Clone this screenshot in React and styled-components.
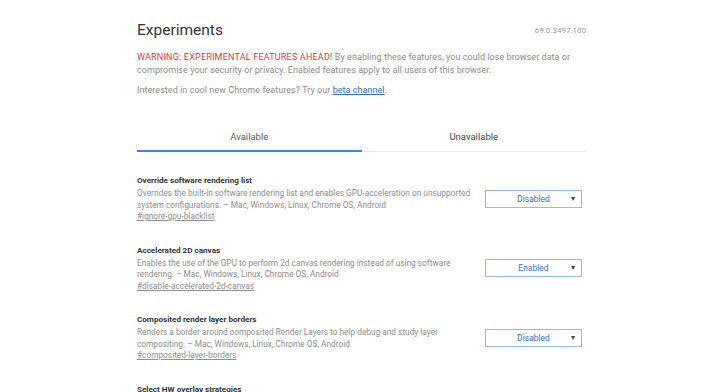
import React from "react";
import styled, { createGlobalStyle } from "styled-components";

const Global = createGlobalStyle`
  html, body { margin: 0; padding: 0; background: #fff; }
  body { font-family: Roboto, "Noto Sans", Arial, sans-serif; color: #333; }
`;

const Page = styled.div`
  padding: 0 120px 0 137px;
  width: 449px;
`;

const Header = styled.header`
  display: flex;
  justify-content: space-between;
  align-items: center;
  height: 30px;
  margin-top: 15px;
`;

const Title = styled.h1`
  margin: 0;
  font-size: 15.5px;
  font-weight: 400;
  color: #333;
  line-height: 30px;
`;

const Version = styled.span`
  font-size: 8px;
  color: #9a9a9a;
`;

const Blurb = styled.p`
  margin: ${(p) => p.$mt || 0}px 0 0;
  font-size: 9px;
  line-height: 13px;
  letter-spacing: 0.05px;
  color: #8b8b8b;
`;

const Warn = styled.span`
  color: #e53935;
  letter-spacing: 0.2px;
`;

const Link = styled.a`
  color: #3367d6;
  text-decoration: underline;
`;

const Tabs = styled.div`
  display: flex;
  margin-top: 32px;
  border-bottom: 1px solid #ebebeb;
`;

const Tab = styled.div`
  flex: 1;
  text-align: center;
  font-size: 9.5px;
  color: ${(p) => (p.$active ? "#5a5a5a" : "#444")};
  height: 23px;
  line-height: 15px;
  box-shadow: ${(p) => (p.$active ? "inset 0 -2px 0 #3b84e8" : "none")};
  margin-bottom: -1px;
`;

const List = styled.div`
  margin-top: 23px;
  display: flex;
  flex-direction: column;
  gap: 22px;
`;

const Feature = styled.div`
  display: flex;
  align-items: center;
  justify-content: space-between;
`;

const Info = styled.div`
  width: 345px;
`;

const FTitle = styled.div`
  font-size: 8.1px;
  font-weight: 700;
  color: #333;
  line-height: 11px;
  margin-bottom: 2px;
`;

const Desc = styled.div`
  font-size: 8.3px;
  line-height: 11.5px;
  color: #8e8e8e;
`;

const Anchor = styled.a`
  display: block;
  font-size: 8.3px;
  line-height: 11.5px;
  color: #8e8e8e;
  text-decoration: underline;
`;

const Select = styled.div`
  box-sizing: border-box;
  width: 97px;
  height: 18px;
  margin-right: 4px;
  border: 1px solid #9fb6e0;
  display: flex;
  align-items: center;
  justify-content: center;
  position: relative;
  font-size: 8.5px;
  color: #3b6fd0;
`;

const Arrow = styled.span`
  position: absolute;
  right: 6px;
  top: 3px;
  font-size: 8px;
  line-height: 10px;
  color: #444;
`;

const features = [
  {
    title: "Override software rendering list",
    desc: "Overrides the built-in software rendering list and enables GPU-acceleration on unsupported system configurations. – Mac, Windows, Linux, Chrome OS, Android",
    link: "#ignore-gpu-blacklist",
    value: "Disabled",
  },
  {
    title: "Accelerated 2D canvas",
    desc: "Enables the use of the GPU to perform 2d canvas rendering instead of using software rendering. – Mac, Windows, Linux, Chrome OS, Android",
    link: "#disable-accelerated-2d-canvas",
    value: "Enabled",
  },
  {
    title: "Composited render layer borders",
    desc: "Renders a border around composited Render Layers to help debug and study layer compositing. – Mac, Windows, Linux, Chrome OS, Android",
    link: "#composited-layer-borders",
    value: "Disabled",
  },
  {
    title: "Select HW overlay strategies",
    desc: "Select strategies used to promote quads to HW overlays. – Chrome OS",
    link: "#overlay-strategies",
    value: "Default",
  },
];

export default function App() {
  return (
    <>
      <Global />
      <Page>
        <Header>
          <Title>Experiments</Title>
          <Version>69.0.3497.100</Version>
        </Header>
        <Blurb $mt={6}>
          <Warn>WARNING: EXPERIMENTAL FEATURES AHEAD!</Warn> By enabling these
          features, you could lose browser data or compromise your security or
          privacy. Enabled features apply to all users of this browser.
        </Blurb>
        <Blurb $mt={7}>
          Interested in cool new Chrome features? Try our{" "}
          <Link href="#">beta channel</Link>.
        </Blurb>
        <Tabs>
          <Tab $active>Available</Tab>
          <Tab>Unavailable</Tab>
        </Tabs>
        <List>
          {features.map((f) => (
            <Feature key={f.link}>
              <Info>
                <FTitle>{f.title}</FTitle>
                <Desc>{f.desc}</Desc>
                <Anchor href={f.link}>{f.link}</Anchor>
              </Info>
              <Select>
                {f.value}
                <Arrow>▾</Arrow>
              </Select>
            </Feature>
          ))}
        </List>
      </Page>
    </>
  );
}
